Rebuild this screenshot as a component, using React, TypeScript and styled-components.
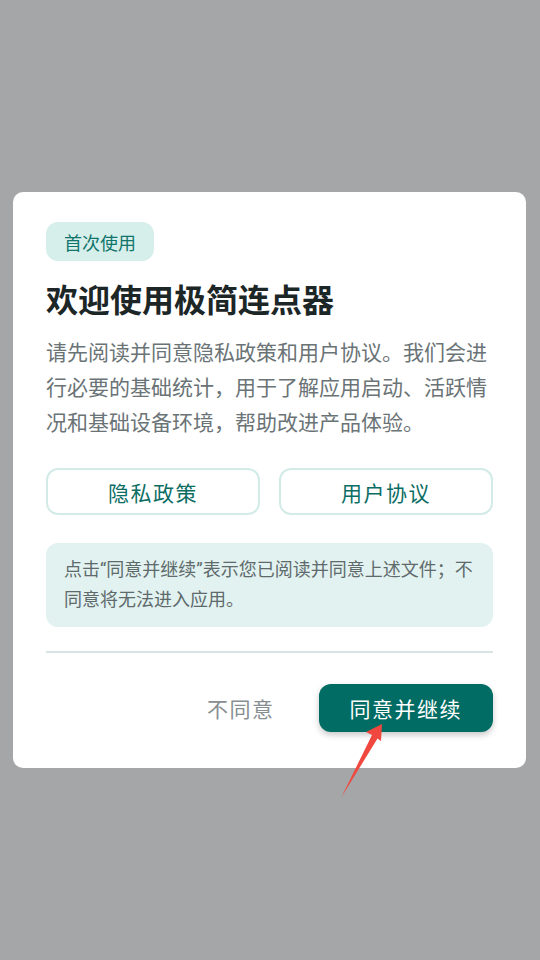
import React from "react";
import styled, { createGlobalStyle } from "styled-components";

const GlobalStyle = createGlobalStyle`
    html, body {
        margin: 0;
        padding: 0;
        background-color: #a5a6a8;
    }
    body {
        font-family: Roboto, "Noto Sans CJK SC", sans-serif;
    }
`;

const Page = styled.div`
    position: relative;
    min-height: 100vh;
    box-sizing: border-box;
    padding: 0 13px;
    display: flex;
    align-items: center;
    justify-content: flex-start;
    background-color: #a5a6a8;
`;

const Card = styled.div`
    width: 513px;
    box-sizing: border-box;
    background-color: #ffffff;
    border-radius: 10px;
    padding: 30px 33px 36px;
    display: flex;
    flex-direction: column;
    align-items: flex-start;
`;

const Badge = styled.span`
    display: inline-flex;
    align-items: center;
    height: 39px;
    padding: 0 18px;
    border-radius: 12px;
    background-color: #d6efeb;
    color: #11756b;
    font-size: 18px;
`;

const Title = styled.h1`
    margin: 19px 0 0;
    font-size: 32px;
    line-height: 42px;
    font-weight: 700;
    color: #1c2627;
`;

const Intro = styled.p`
    margin: 14px 0 0;
    font-size: 21px;
    line-height: 35px;
    color: #6a7376;
`;

const LinkRow = styled.div`
    width: 100%;
    margin-top: 27px;
    display: grid;
    grid-template-columns: 1fr 1fr;
    gap: 19px;
`;

const LinkButton = styled.button`
    height: 47px;
    box-sizing: border-box;
    border: 2px solid #d3ebe7;
    border-radius: 12px;
    background-color: #ffffff;
    color: #0b6d64;
    font-family: inherit;
    font-size: 21px;
    letter-spacing: 1.5px;
    cursor: pointer;
`;

const Notice = styled.div`
    width: 100%;
    box-sizing: border-box;
    margin-top: 28px;
    padding: 12px 18px;
    border-radius: 12px;
    background-color: #e2f2f0;
    color: #5e6a6c;
    font-size: 18px;
    line-height: 30px;
`;

const Divider = styled.hr`
    width: 100%;
    margin: 24px 0 0;
    border: none;
    height: 2px;
    background-color: #d9e4e5;
`;

const Actions = styled.div`
    width: 100%;
    margin-top: 31px;
    display: flex;
    justify-content: flex-end;
    align-items: center;
    gap: 24px;
`;

const ActionButton = styled.button<{ $primary?: boolean }>`
    height: 48px;
    padding: ${(p) => (p.$primary ? "0 31px" : "0 20px")};
    border: none;
    border-radius: 12px;
    background-color: ${(p) => (p.$primary ? "#016c63" : "transparent")};
    color: ${(p) => (p.$primary ? "#ffffff" : "#878e91")};
    box-shadow: ${(p) => (p.$primary ? "0 3px 6px rgba(0, 0, 0, 0.22)" : "none")};
    font-family: inherit;
    font-size: 21px;
    letter-spacing: 1.5px;
    cursor: pointer;
`;

const Annotation = styled.svg`
    position: absolute;
    left: 0;
    top: 0;
    pointer-events: none;
`;

export default function App() {
    return (
        <>
            <GlobalStyle />
            <Page>
                <Card>
                    <Badge>首次使用</Badge>
                    <Title>欢迎使用极简连点器</Title>
                    <Intro>
                        请先阅读并同意隐私政策和用户协议。我们会进行必要的基础统计，用于了解应用启动、活跃情况和基础设备环境，帮助改进产品体验。
                    </Intro>
                    <LinkRow>
                        <LinkButton>隐私政策</LinkButton>
                        <LinkButton>用户协议</LinkButton>
                    </LinkRow>
                    <Notice>
                        点击“同意并继续”表示您已阅读并同意上述文件；不同意将无法进入应用。
                    </Notice>
                    <Divider />
                    <Actions>
                        <ActionButton>不同意</ActionButton>
                        <ActionButton $primary>同意并继续</ActionButton>
                    </Actions>
                </Card>
                <Annotation width="540" height="960" viewBox="0 0 540 960">
                    <polygon
                        points="382,724 366,732 372,735 341.5,797 377.5,738.5 381,741"
                        fill="#f0483e"
                    />
                </Annotation>
            </Page>
        </>
    );
}
